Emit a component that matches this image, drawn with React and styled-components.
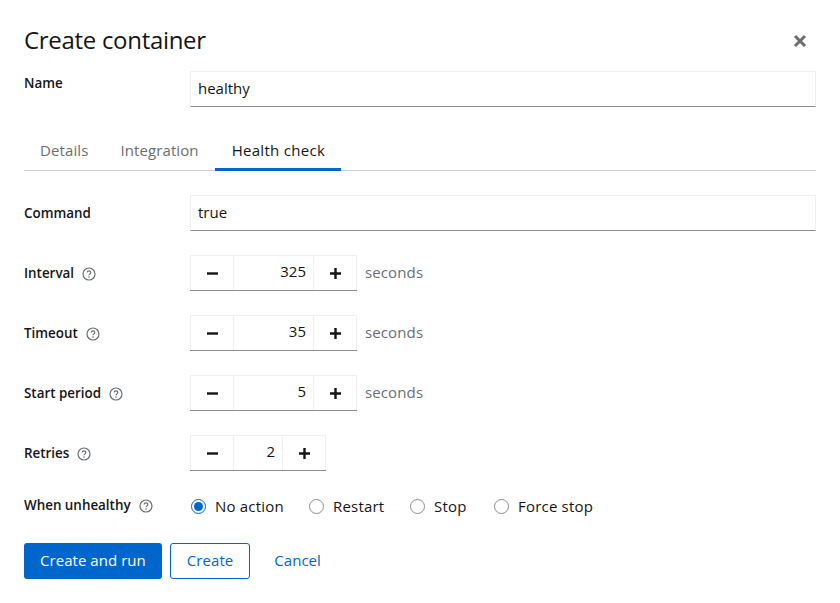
import React from 'react';
import styled, { createGlobalStyle } from 'styled-components';

const Global = createGlobalStyle`
  html, body { margin: 0; padding: 0; background: #fff; }
  body { font-family: "Open Sans", "Noto Sans", sans-serif; color: #151515; }
`;

const Modal = styled.div`
  width: 840px;
  height: 603px;
  box-sizing: border-box;
  padding: 24px 24px 0 24px;
  overflow: hidden;
`;

const Header = styled.div`
  display: flex;
  align-items: center;
  justify-content: space-between;
  height: 32px;
  margin-bottom: 15px;
`;

const Title = styled.h1`
  margin: 0;
  font-size: 24px;
  font-weight: 400;
  line-height: 32px;
  letter-spacing: -0.3px;
  color: #151515;
`;

const Close = styled.button`
  border: 0;
  background: none;
  padding: 0;
  width: 14px;
  height: 14px;
  margin-right: 9px;
  margin-top: 2px;
  display: flex;
`;

const Row = styled.div`
  display: grid;
  grid-template-columns: 166px 1fr;
  align-items: ${p => (p.$center ? 'center' : 'start')};
  min-height: ${p => p.$min ?? 36}px;
  margin-bottom: ${p => p.$gap ?? 24}px;
`;

const Label = styled.label`
  display: flex;
  align-items: center;
  gap: 8px;
  font-size: 13.4px;
  font-weight: 600;
  line-height: 24px;
  margin-top: ${p => p.$top ?? 0}px;
`;

const HelpIcon = styled.svg`
  flex: none;
  margin-top: 2px;
`;

const TextInput = styled.div`
  height: 36px;
  box-sizing: border-box;
  border: 1px solid #f0f0f0;
  border-bottom: 1px solid #8a8d90;
  padding: 0 7px;
  font-size: 15px;
  line-height: 33px;
  color: #151515;
`;

const Tabs = styled.div`
  display: flex;
  height: 39px;
  box-sizing: border-box;
  border-bottom: 1px solid #d2d2d2;
  margin-bottom: 24px;
`;

const Tab = styled.div`
  height: 39px;
  box-sizing: border-box;
  padding: 0 16px 0 ${p => (p.$active ? 17 : 16)}px;
  min-width: ${p => (p.$active ? '126px' : 'auto')};
  font-size: 15px;
  letter-spacing: ${p => (p.$active ? 0.3 : 0.1)}px;
  line-height: 36px;
  white-space: nowrap;
  color: ${p => (p.$active ? '#151515' : '#6a6e73')};
  border-bottom: 3px solid ${p => (p.$active ? '#06c' : 'transparent')};
`;

const Stepper = styled.div`
  display: flex;
  align-items: center;
`;

const Group = styled.div`
  display: flex;
  height: 36px;
  box-sizing: border-box;
  border-bottom: 1px solid #8a8d90;
`;

const StepButton = styled.div`
  width: ${p => p.$w}px;
  height: 35px;
  box-sizing: border-box;
  border: 1px solid #f0f0f0;
  border-bottom: 0;
  display: flex;
  align-items: center;
  justify-content: center;
  color: #151515;
`;

const Value = styled.div`
  width: ${p => p.$w}px;
  height: 35px;
  box-sizing: border-box;
  border-top: 1px solid #f0f0f0;
  padding-right: 7px;
  text-align: right;
  font-size: 15px;
  line-height: 31px;
  color: #151515;
`;

const Unit = styled.span`
  margin-left: 8px;
  font-size: 15px;
  letter-spacing: 0.12px;
  line-height: 31px;
  padding-bottom: 2px;
  color: #6a6e73;
`;

const Radios = styled.div`
  display: flex;
  align-items: center;
  height: 24px;
`;

const RadioItem = styled.div`
  display: flex;
  align-items: center;
  gap: 9px;
  width: ${p => p.$w}px;
  font-size: 15px;
  letter-spacing: 0.2px;
  line-height: 20px;
  padding-bottom: 2px;
  color: #151515;
`;

const RadioDot = styled.span`
  flex: none;
  width: 15px;
  height: 15px;
  margin-left: 1px;
  box-sizing: border-box;
  border-radius: 50%;
  border: 1px solid ${p => (p.$on ? '#06c' : '#8a8d90')};
  display: flex;
  align-items: center;
  justify-content: center;
  &::after {
    content: '';
    width: 9px;
    height: 9px;
    border-radius: 50%;
    background: ${p => (p.$on ? '#06c' : 'transparent')};
  }
`;

const Actions = styled.div`
  display: flex;
  gap: 8px;
`;

const Button = styled.button`
  height: 36px;
  box-sizing: border-box;
  padding: 0 16px 3px;
  border-radius: 3px;
  font-family: inherit;
  font-size: 15px;
  letter-spacing: 0.05px;
  background: ${p => (p.$kind === 'primary' ? '#06c' : '#fff')};
  color: ${p => (p.$kind === 'primary' ? '#fff' : '#06c')};
  border: ${p => (p.$kind === 'secondary' ? '1px solid #06c' : '0')};
`;

const Help = () => (
  <HelpIcon width="14" height="14" viewBox="0 0 14 14" fill="none">
    <circle cx="7" cy="7" r="6" stroke="#6a6e73" strokeWidth="1.2" />
    <path d="M5.2 5.6c0-1 .8-1.7 1.8-1.7s1.8.7 1.8 1.6c0 1.3-1.8 1.4-1.8 2.7" stroke="#6a6e73" strokeWidth="1.2" />
    <circle cx="7" cy="10" r=".8" fill="#6a6e73" />
  </HelpIcon>
);

const Minus = () => (
  <svg width="11" height="11" viewBox="0 0 11 11"><rect x="0" y="4.3" width="11" height="2.4" fill="#151515" /></svg>
);

const Plus = () => (
  <svg width="11" height="11" viewBox="0 0 11 11">
    <path d="M0 4.3h4.3V0h2.4v4.3H11v2.4H6.7V11H4.3V6.7H0z" fill="#151515" />
  </svg>
);

const fields = [
  { label: 'Interval', value: '325', unit: true },
  { label: 'Timeout', value: '35', unit: true },
  { label: 'Start period', value: '5', unit: true },
  { label: 'Retries', value: '2', unit: false },
];

const radios = [
  { label: 'No action', on: true, w: 118 },
  { label: 'Restart', w: 101 },
  { label: 'Stop', w: 84 },
  { label: 'Force stop', w: 110 },
];

export default function App() {
  return (
    <Modal>
      <Global />
      <Header>
        <Title>Create container</Title>
        <Close aria-label="Close">
          <svg width="14" height="14" viewBox="0 0 14 14">
            <path d="M2 2l10 10M12 2L2 12" stroke="#6a6e73" strokeWidth="3" />
          </svg>
        </Close>
      </Header>
      <Row $gap={25}>
        <Label>Name</Label>
        <TextInput>healthy</TextInput>
      </Row>
      <Tabs>
        <Tab>Details</Tab>
        <Tab>Integration</Tab>
        <Tab $active>Health check</Tab>
      </Tabs>
      <Row $center>
        <Label>Command</Label>
        <TextInput>true</TextInput>
      </Row>
      {fields.map(f => (
        <Row key={f.label} $center>
          <Label>{f.label}<Help /></Label>
          <Stepper>
            <Group>
              <StepButton $w={44}><Minus /></StepButton>
              <Value $w={f.unit ? 79 : 48}>{f.value}</Value>
              <StepButton $w={44}><Plus /></StepButton>
            </Group>
            {f.unit && <Unit>seconds</Unit>}
          </Stepper>
        </Row>
      ))}
      <Row $min={24}>
        <Label $top={-2}>When unhealthy<Help /></Label>
        <Radios>
          {radios.map(r => (
            <RadioItem key={r.label} $w={r.w}>
              <RadioDot $on={r.on} />
              {r.label}
            </RadioItem>
          ))}
        </Radios>
      </Row>
      <Actions>
        <Button $kind="primary">Create and run</Button>
        <Button $kind="secondary">Create</Button>
        <Button $kind="link">Cancel</Button>
      </Actions>
    </Modal>
  );
}
